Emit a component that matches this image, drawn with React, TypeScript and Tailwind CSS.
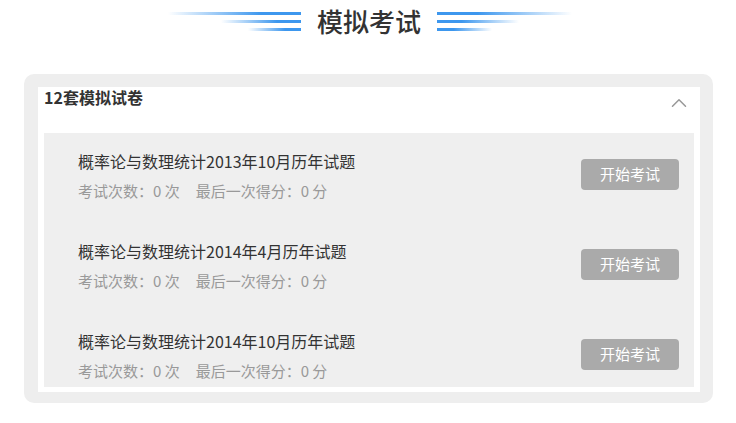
import { ChevronUp } from "lucide-react";

const papers = [
  "概率论与数理统计2013年10月历年试题",
  "概率论与数理统计2014年4月历年试题",
  "概率论与数理统计2014年10月历年试题",
];

function Lines({ side }: { side: "left" | "right" }) {
  const left = side === "left";
  const widths = left ? ["w-[133px]", "w-[80px]", "w-[53px]"] : ["w-[135px]", "w-[82px]", "w-[55px]"];
  return (
    <div className={`flex w-[135px] flex-col gap-[5px] ${left ? "items-end" : "items-start"}`}>
      {widths.map((w) => (
        <span
          key={w}
          className={`h-[3px] ${w} ${
            left
              ? "bg-linear-to-r from-[#3d97ee]/0 to-[#3d97ee] to-70%"
              : "bg-linear-to-l from-[#3d97ee]/0 to-[#3d97ee] to-70%"
          }`}
        />
      ))}
    </div>
  );
}

export default function App() {
  return (
    <div className="min-h-[423px] w-[736px] bg-white font-['Noto_Sans_CJK_SC','Noto_Sans',sans-serif]">
      {/* Section heading */}
      <header className="flex h-[42px] items-center justify-center gap-[16px] pl-[2px]">
        <Lines side="left" />
        <h1 className="text-[26px] font-medium leading-none text-[#333]">模拟考试</h1>
        <Lines side="right" />
      </header>

      <div className="ml-[24px] mt-[32px] w-[689px] rounded-[10px] bg-[#eeeeee] pb-[11px] pl-[14px] pr-[13px] pt-[13px]">
        <div className="bg-white px-[6px] pb-[5px]">
          <div className="flex h-[46px] items-start justify-between">
            <span className="text-[16px] font-bold leading-[20px] text-[#333]">12套模拟试卷</span>
            <ChevronUp className="mr-[2px] mt-[3px] h-[26px] w-[26px] text-[#999]" strokeWidth={1.4} />
          </div>

          <div className="flex flex-col gap-[40px] bg-[#efefef] pb-[6px] pl-[34px] pr-[15px] pt-[18px]">
            {papers.map((title) => (
              <div key={title} className="flex h-[50px] items-start justify-between">
                <div className="flex flex-col gap-[10px]">
                  <div className="text-[16px] leading-[20px] text-[#333]">{title}</div>
                  <div className="flex gap-[16px] text-[15px] leading-[20px] text-[#999]">
                    <span>考试次数：0 次</span>
                    <span>最后一次得分：0 分</span>
                  </div>
                </div>
                <button className="mt-[8px] h-[31px] w-[98px] rounded-[4px] bg-[#aaaaaa] text-[15px] text-white">
                  开始考试
                </button>
              </div>
            ))}
          </div>
        </div>
      </div>
    </div>
  );
}
